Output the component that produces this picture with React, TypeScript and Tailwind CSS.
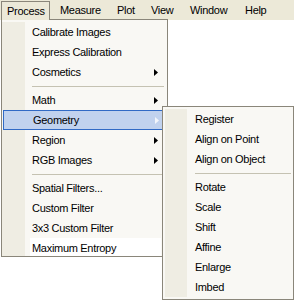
const font = { fontFamily: '"Liberation Sans", Arial, sans-serif' };

type Item = { label: string; sub?: boolean; hot?: boolean; white?: boolean } | "sep";

const mainItems: Item[] = [
  { label: "Calibrate Images" },
  { label: "Express Calibration" },
  { label: "Cosmetics", sub: true },
  "sep",
  { label: "Math", sub: true },
  { label: "Geometry", sub: true, hot: true },
  { label: "Region", sub: true },
  { label: "RGB Images", sub: true },
  "sep",
  { label: "Spatial Filters..." },
  { label: "Custom Filter" },
  { label: "3x3 Custom Filter" },
  { label: "Maximum Entropy", white: true },
];

const geometryItems: Item[] = [
  { label: "Register" },
  { label: "Align on Point" },
  { label: "Align on Object" },
  "sep",
  { label: "Rotate" },
  { label: "Scale" },
  { label: "Shift" },
  { label: "Affine" },
  { label: "Enlarge" },
  { label: "Imbed" },
];

const Arrow = ({ light }: { light?: boolean }) => (
  <svg width="4" height="7" viewBox="0 0 4 7" className="shrink-0">
    <polygon points="0,0 4,3.5 0,7" fill={light ? "#f4f6fb" : "#000"} />
  </svg>
);

const MainRow = ({ item }: { item: Item }) => {
  if (item === "sep") {
    return (
      <div className="flex h-[8px]">
        <div className="w-[23px] bg-[#EFEDE3]"></div>
        <div className="flex-1 flex items-center pl-[7px] pr-[2px]">
          <div className="h-px w-full bg-[#C5C2B2]"></div>
        </div>
      </div>
    );
  }
  if (item.hot) {
    return (
      <div className="flex items-center h-[20px] ml-[1px] border border-[#316AC5] bg-[#C1D2EE]">
        <div className="w-[22px]"></div>
        <div className="flex-1 pl-[7px] text-black">{item.label}</div>
        <div className="pr-[6px]"><Arrow light /></div>
      </div>
    );
  }
  return (
    <div className="flex h-[20px]">
      <div className="w-[23px] bg-[#EFEDE3]"></div>
      <div className={"flex-1 flex items-center " + (item.white ? "ml-[5px] mr-[5px] bg-white pl-[2px]" : "pl-[7px]")}>
        {item.label}
      </div>
      {item.sub && (
        <div className="flex items-center pr-[8px]">
          <Arrow />
        </div>
      )}
    </div>
  );
};

const SubRow = ({ item }: { item: Item }) => {
  if (item === "sep") {
    return (
      <div className="flex h-[8px]">
        <div className="w-[22px] bg-[#EFEDE3]"></div>
        <div className="flex-1 flex items-center pl-[8px] pr-[2px]">
          <div className="h-px w-full bg-[#C5C2B2]"></div>
        </div>
      </div>
    );
  }
  return (
    <div className="flex h-[20px]">
      <div className="w-[22px] bg-[#EFEDE3]"></div>
      <div className="flex-1 flex items-center pl-[8px]">{item.label}</div>
    </div>
  );
};

export default function App() {
  const bar = [
    { label: "Measure", w: "w-[57px]" },
    { label: "Plot", w: "w-[34px]" },
    { label: "View", w: "w-[39px]" },
    { label: "Window", w: "w-[55px]" },
    { label: "Help", w: "w-[38px]" },
  ];

  return (
    <div className="relative w-[294px] h-[300px] bg-white overflow-hidden text-[11px] tracking-[-0.3px] text-black" style={font}>
      {/* menu bar */}
      <div className="flex h-[20px] bg-[#ECE9D8]">
        <div className="ml-[1px] mt-[1px] w-[49px] h-[19px] border-l border-t border-r border-[#8A867A] flex items-center pl-[5px]">
          Process
        </div>
        <div className="w-[2px]"></div>
        {bar.map((b) => (
          <div key={b.label} className={b.w + " flex items-center pl-[8px]"}>
            {b.label}
          </div>
        ))}
      </div>

      {/* Process dropdown */}
      <div className="absolute left-[1px] top-[19px] w-[167px] h-[238px] border border-[#8A867A] bg-[#F9F8F4] pt-[2px] pr-[1px] overflow-hidden">
        {mainItems.map((it, i) => (
          <MainRow key={i} item={it} />
        ))}
      </div>
      {/* hide dropdown top edge under the open title */}
      <div className="absolute left-[2px] top-[19px] w-[47px] h-px bg-[#ECE9D8]"></div>

      {/* Geometry submenu */}
      <div className="absolute left-[162px] top-[106px] w-[132px] h-[194px] border border-[#8A867A] bg-[#F9F8F4] py-[2px] pl-[2px]">
        {geometryItems.map((it, i) => (
          <SubRow key={i} item={it} />
        ))}
      </div>
    </div>
  );
}
